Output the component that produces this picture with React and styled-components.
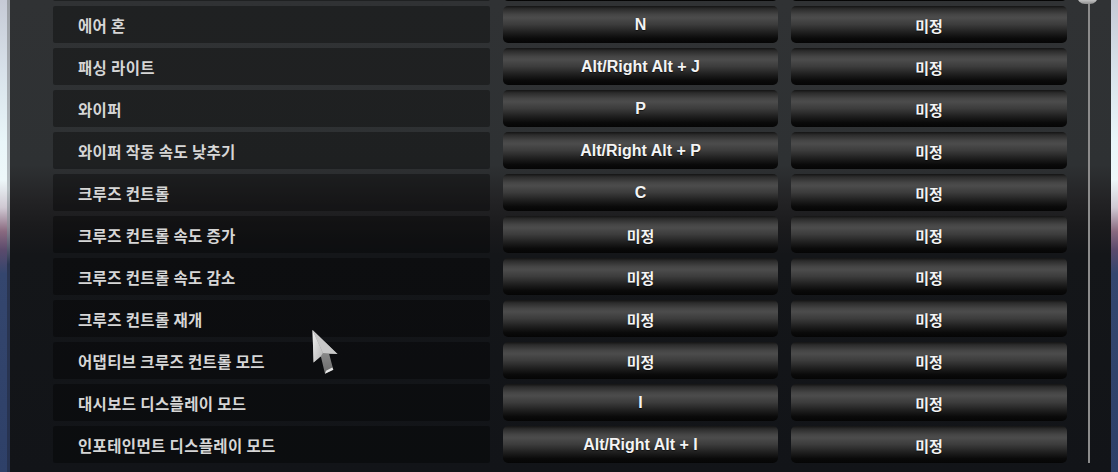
import React from "react";
import styled, { createGlobalStyle } from "styled-components";

const Global = createGlobalStyle`
  html, body { margin: 0; padding: 0; background: #111418; }
  body { width: 1118px; height: 472px; overflow: hidden; }
`;

const Screen = styled.div`
  position: relative;
  display: flex;
  width: 1118px;
  height: 472px;
  overflow: hidden;
`;

const Backdrop = styled.div`
  flex: 0 0 ${(p) => p.$w}px;
  background: linear-gradient(
    to bottom,
    #c6cad6 0%,
    #d8e2ea 15%,
    #e9f6f9 30%,
    #eef8fa 38%,
    #cfc8d2 44%,
    #8a6a80 49%,
    #5a4a6c 53%,
    #34466e 58%,
    #2e4068 100%
  );
`;

const Frame = styled.div`
  flex: 0 0 3px;
  background: linear-gradient(
    to bottom,
    #9a9ea4 0%,
    #b8c0c4 40%,
    #8c8894 48%,
    #2a3550 56%,
    #263250 100%
  );
`;

const Panel = styled.div`
  flex: 1;
  display: flex;
  overflow: hidden;
  background: linear-gradient(
    to bottom,
    #303234 0px,
    #2e3133 165px,
    #232325 200px,
    #1b1b1d 225px,
    #141619 255px,
    #121418 472px
  );
`;

const List = styled.div`
  flex: 1;
  display: flex;
  flex-direction: column;
  gap: 5px;
  padding-left: 43px;
  margin-top: -36px;
`;

const Row = styled.div`
  display: grid;
  grid-template-columns: 437px 275px 276px;
  column-gap: 13px;
  height: 37px;
`;

const Label = styled.div`
  display: flex;
  align-items: center;
  padding-left: 25px;
  padding-top: 1px;
  background: rgba(0, 0, 0, 0.34);
  border-radius: 2px;
  color: #d6d6d6;
  font-family: "Noto Sans CJK KR", "Noto Sans", sans-serif;
  font-weight: 700;
  font-size: 15.5px;
  letter-spacing: 0.35px;
`;

const Key = styled.div`
  display: flex;
  align-items: center;
  justify-content: center;
  border-radius: 5px;
  background: linear-gradient(
    to bottom,
    #141414 0%,
    #2c2c2c 8%,
    #464646 24%,
    #4c4c4c 32%,
    #3c3c3c 50%,
    #1e1e1e 72%,
    #0a0a0a 88%,
    #050505 100%
  );
  color: #f4f4f4;
  font-family: ${(p) =>
    p.$ko
      ? `"Noto Sans CJK KR", sans-serif`
      : `"Liberation Sans", Arial, sans-serif`};
  font-weight: 700;
  font-size: ${(p) => (p.$ko ? 15 : 16)}px;
  text-shadow: 0 1px 1px rgba(0, 0, 0, 0.6);
  padding-top: 1px;
`;

const ScrollTrack = styled.div`
  position: relative;
  flex: 0 0 44px;
  display: flex;
  justify-content: center;
`;

const Rail = styled.div`
  width: 2px;
  height: 463px;
  margin-right: 1px;
  background: #8c8c8c;
`;

const Thumb = styled.div`
  position: absolute;
  top: -8px;
  left: 10px;
  width: 21px;
  height: 12px;
  border-radius: 0 0 8px 8px;
  background: linear-gradient(to bottom, #e8e8e8, #bdbdbd 70%, #8e8e8e);
`;

const Cursor = styled.svg`
  position: absolute;
  left: 309px;
  top: 328px;
  pointer-events: none;
`;

const rows = [
  ["", "", ""],
  ["에어 혼", "N", "미정"],
  ["패싱 라이트", "Alt/Right Alt + J", "미정"],
  ["와이퍼", "P", "미정"],
  ["와이퍼 작동 속도 낮추기", "Alt/Right Alt + P", "미정"],
  ["크루즈 컨트롤", "C", "미정"],
  ["크루즈 컨트롤 속도 증가", "미정", "미정"],
  ["크루즈 컨트롤 속도 감소", "미정", "미정"],
  ["크루즈 컨트롤 재개", "미정", "미정"],
  ["어댑티브 크루즈 컨트롤 모드", "미정", "미정"],
  ["대시보드 디스플레이 모드", "I", "미정"],
  ["인포테인먼트 디스플레이 모드", "Alt/Right Alt + I", "미정"],
];

const isKo = (s) => /[\uac00-\ud7a3]/.test(s);

export default function App() {
  return (
    <>
      <Global />
      <Screen>
        <Backdrop $w={7} />
        <Frame />
        <Panel>
          <List>
            {rows.map(([label, primary, secondary], i) => (
              <Row key={i}>
                <Label>{label}</Label>
                <Key $ko={isKo(primary)}>{primary}</Key>
                <Key $ko={isKo(secondary)}>{secondary}</Key>
              </Row>
            ))}
          </List>
          <ScrollTrack>
            <Rail />
            <Thumb />
          </ScrollTrack>
        </Panel>
        <Backdrop $w={7} />
        <Cursor width="32" height="50" viewBox="0 0 30 48">
          <defs>
            <linearGradient id="cl" x1="0" y1="0" x2="1" y2="1">
              <stop offset="0" stopColor="#f2f2f2" />
              <stop offset="1" stopColor="#b4b4b4" />
            </linearGradient>
            <linearGradient id="cd" x1="0" y1="0" x2="0" y2="1">
              <stop offset="0" stopColor="#a8a8a8" />
              <stop offset="1" stopColor="#6c6c6c" />
            </linearGradient>
          </defs>
          <polygon
            points="3,2 4,33 11,27 15,44 23,40 19,25 27,25"
            fill="url(#cd)"
          />
          <polygon points="3,2 4,33 11,27 13,24" fill="url(#cl)" />
          <polygon points="3,2 13,24 27,25" fill="#c8c8c8" />
          <polygon points="15,44 23,40 22,38 16,41" fill="#e8e8e8" />
        </Cursor>
      </Screen>
    </>
  );
}
